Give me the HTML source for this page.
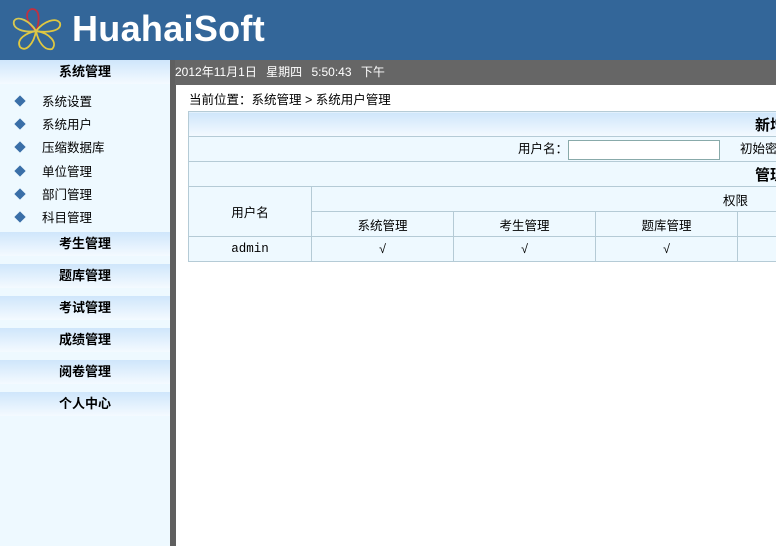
<!DOCTYPE html>
<html><head><meta charset="utf-8"><style>
*{margin:0;padding:0;box-sizing:border-box}
body{width:776px;height:546px;overflow:hidden;position:relative;background:#fff;font-family:"Liberation Sans","Noto Sans CJK SC","WenQuanYi Zen Hei",sans-serif;font-size:12px;color:#000}
#hd{position:absolute;left:0;top:0;width:776px;height:60px;background:#336699}
#hd .t{position:absolute;left:72px;top:8px;color:#fff;font-size:36px;font-weight:bold;letter-spacing:0.3px}
#sb{position:absolute;left:0;top:60px;width:170px;height:486px;background:#eef9ff}
#sep{position:absolute;left:170px;top:60px;width:6px;height:486px;background:#5f5f5f}
#tb{position:absolute;left:175px;top:60px;width:601px;height:25px;background:#666;color:#fff;font-size:12px;line-height:25px;word-spacing:6px}
.sh{position:absolute;left:0;width:170px;height:24px;background:linear-gradient(#cfe6fb,#f4faff);font-weight:bold;font-size:13px;text-align:center;line-height:24px}
.mi{position:absolute;left:16px;font-size:12.5px;line-height:16px}
.mi i{display:inline-block;width:8px;height:8px;background:#3a6fa8;transform:rotate(45deg);margin-right:18px;vertical-align:1px}
#loc{position:absolute;left:189px;top:89px;font-size:12.5px}
table{position:absolute;left:188px;top:111px;border-collapse:collapse;background:#eef9ff;width:700px}
td{border:1px solid #b5cbd6;height:25px;text-align:center;font-size:12.5px}
</style></head><body>
<div id="hd">
<svg width="56" height="52" style="position:absolute;left:10px;top:5px" viewBox="0 0 56 52">
<g fill="none" stroke-width="1.8">
<path d="M26 26 C16 18 14 6 22 4 C30 4 30 16 26 26Z" stroke="#c03040"/>
<path d="M26 26 C34 16 46 12 50 18 C52 26 38 28 26 26Z" stroke="#e0c840"/>
<path d="M26 26 C40 28 48 38 42 44 C34 46 28 36 26 26Z" stroke="#e0c840"/>
<path d="M26 26 C24 38 16 48 10 42 C6 34 16 28 26 26Z" stroke="#e0c840"/>
<path d="M26 26 C14 28 2 24 4 16 C8 10 20 16 26 26Z" stroke="#d8c850"/>
</g></svg>
<div class="t">HuahaiSoft</div></div>
<div id="sb"></div>
<div class="sh" style="top:60px">系统管理</div>
<div class="mi" style="top:94px"><i></i>系统设置</div>
<div class="mi" style="top:117px"><i></i>系统用户</div>
<div class="mi" style="top:140px"><i></i>压缩数据库</div>
<div class="mi" style="top:164px"><i></i>单位管理</div>
<div class="mi" style="top:187px"><i></i>部门管理</div>
<div class="mi" style="top:210px"><i></i>科目管理</div>
<div class="sh" style="top:232px">考生管理</div>
<div class="sh" style="top:264px">题库管理</div>
<div class="sh" style="top:296px">考试管理</div>
<div class="sh" style="top:328px">成绩管理</div>
<div class="sh" style="top:360px">阅卷管理</div>
<div class="sh" style="top:392px">个人中心</div>
<div id="sep"></div>
<div id="tb">2012年11月1日 星期四 5:50:43 下午</div>
<div id="loc">当前位置：系统管理 &gt; 系统用户管理</div>
<table>
<tr><td colspan="5" style="background:linear-gradient(#cfe6fb,#f4faff);text-align:left;padding-left:566px;font-weight:bold;font-size:15px">新增</td></tr>
<tr><td colspan="5" style="text-align:left;padding-left:329px">用户名：<span style="display:inline-block;width:152px;height:20px;border:1px solid #8aa;background:#fff;vertical-align:middle;margin-right:20px"></span>初始密码</td></tr>
<tr><td colspan="5" style="text-align:left;padding-left:566px;font-weight:bold;font-size:15px">管理</td></tr>
<tr><td rowspan="2" style="width:123px">用户名</td><td colspan="4" style="text-align:left;padding-left:411px">权限</td></tr>
<tr><td style="width:142px">系统管理</td><td style="width:142px">考生管理</td><td style="width:142px">题库管理</td><td></td></tr>
<tr><td style="font-family:'Liberation Mono',monospace">admin</td><td>√</td><td>√</td><td>√</td><td></td></tr>
</table>
</body></html>
